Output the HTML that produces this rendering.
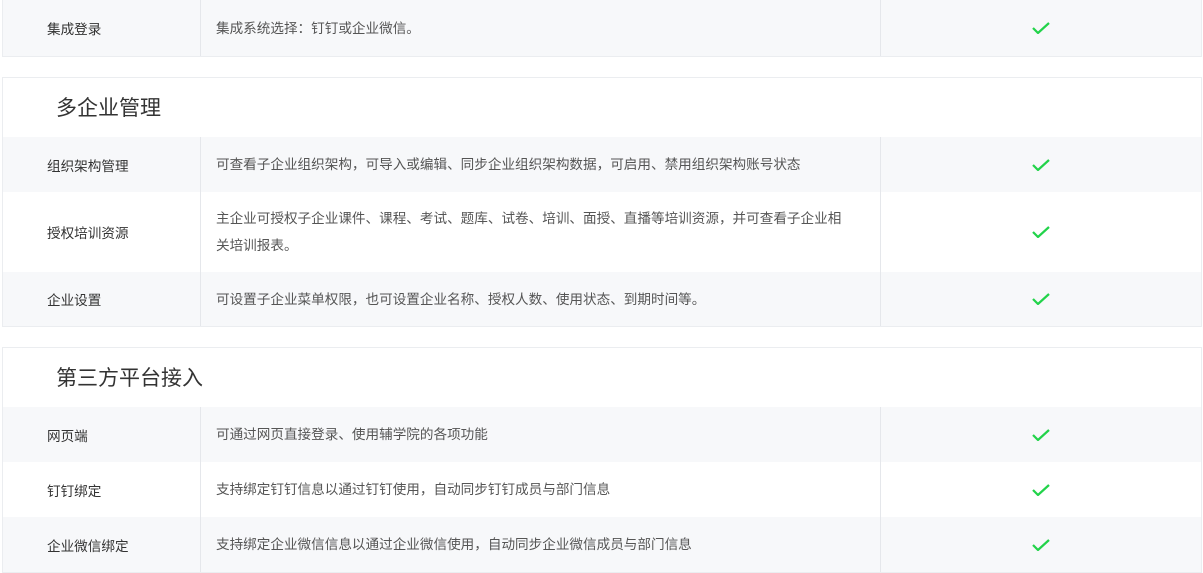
<!DOCTYPE html>
<html><head><meta charset="utf-8"><style>
body{margin:0;width:1203px;height:572px;background:#fff;font-family:"Liberation Sans","Noto Sans CJK SC",sans-serif;position:relative;overflow:hidden}
.blk{position:absolute;left:2px;width:1200px;border:1px solid #ebedf0;box-sizing:border-box}
.title{height:59px;font-size:21px;color:#333;padding-left:53px;line-height:62px}
.row{display:flex;font-size:13.6px;color:#333}
.row.g{background:#f7f8fa}
.c1{width:198px;padding-left:44px;box-sizing:border-box;display:flex;align-items:center;border-right:1px solid #e5e7eb}
.c2{width:680px;padding:0 10px 0 15px;box-sizing:border-box;display:flex;align-items:center;color:#555;line-height:27px;border-right:1px solid #e5e7eb}
.c3{flex:1;display:flex;align-items:center;justify-content:center}
</style></head><body>
<svg width="0" height="0" style="position:absolute"><defs><symbol id="ck" viewBox="0 0 18 12"><path d="M1 6l5 5 11-10" fill="none" stroke="#22d34a" stroke-width="2.2"/></symbol></defs></svg>
<div class="blk" style="top:0;height:57px;border-top:none">
<div class="row g" style="height:56px"><div class="c1">集成登录</div><div class="c2">集成系统选择：钉钉或企业微信。</div><div class="c3"><svg width="18" height="12"><use href="#ck"/></svg></div></div>
</div>
<div class="blk" style="top:77px;height:250px">
<div class="title">多企业管理</div>
<div class="row g" style="height:55px"><div class="c1">组织架构管理</div><div class="c2">可查看子企业组织架构，可导入或编辑、同步企业组织架构数据，可启用、禁用组织架构账号状态</div><div class="c3"><svg width="18" height="12"><use href="#ck"/></svg></div></div>
<div class="row" style="height:80px"><div class="c1">授权培训资源</div><div class="c2"><span>主企业可授权子企业课件、课程、考试、题库、试卷、培训、面授、直播等培训资源，并可查看子企业相<br>关培训报表。</span></div><div class="c3"><svg width="18" height="12"><use href="#ck"/></svg></div></div>
<div class="row g" style="height:54px"><div class="c1">企业设置</div><div class="c2">可设置子企业菜单权限，也可设置企业名称、授权人数、使用状态、到期时间等。</div><div class="c3"><svg width="18" height="12"><use href="#ck"/></svg></div></div>
</div>
<div class="blk" style="top:347px;height:226px">
<div class="title">第三方平台接入</div>
<div class="row g" style="height:55px"><div class="c1">网页端</div><div class="c2">可通过网页直接登录、使用辅学院的各项功能</div><div class="c3"><svg width="18" height="12"><use href="#ck"/></svg></div></div>
<div class="row" style="height:55px"><div class="c1">钉钉绑定</div><div class="c2">支持绑定钉钉信息以通过钉钉使用，自动同步钉钉成员与部门信息</div><div class="c3"><svg width="18" height="12"><use href="#ck"/></svg></div></div>
<div class="row g" style="height:55px"><div class="c1">企业微信绑定</div><div class="c2">支持绑定企业微信信息以通过企业微信使用，自动同步企业微信成员与部门信息</div><div class="c3"><svg width="18" height="12"><use href="#ck"/></svg></div></div>
</div>
</body></html>
